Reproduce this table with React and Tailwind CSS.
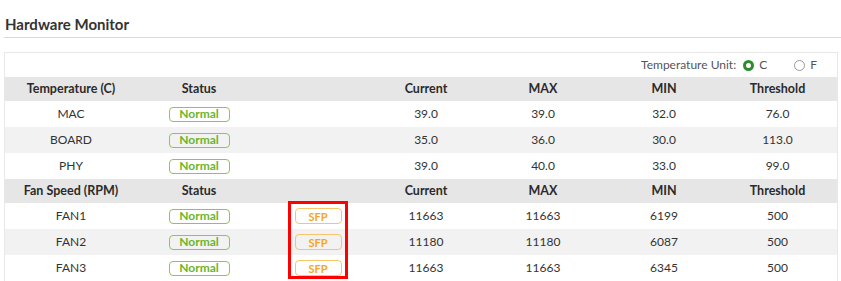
import React from "react";

const cols = "grid grid-cols-[132px_124px_114px_102px_132px_110px_117px]";

function Normal() {
  return (
    <span className="inline-flex items-center justify-center w-[61px] h-[15px] border border-[#8cc84b] rounded-[4px] text-[#6cb52d] text-[12px] font-bold leading-none">
      Normal
    </span>
  );
}
function Sfp() {
  return (
    <span className="inline-flex items-center justify-center w-[47px] h-[16px] border border-[#f9c46a] rounded-[4px] text-[#f5a623] text-[11px] font-bold leading-none">
      SFP
    </span>
  );
}

function HeaderRow({ first }) {
  return (
    <div className={`${cols} h-[24px] bg-[#e6e6e6] items-center text-center font-bold text-[12.5px] text-[#2b2b2b]`}>
      <div>{first}</div>
      <div>Status</div>
      <div></div>
      <div>Current</div>
      <div>MAX</div>
      <div>MIN</div>
      <div>Threshold</div>
    </div>
  );
}

function DataRow({ name, cur, max, min, th, alt, sfp }) {
  return (
    <div className={`${cols} h-[26px] items-center text-center text-[12px] text-[#333] ${alt ? "bg-[#f2f2f2]" : "bg-white"}`}>
      <div>{name}</div>
      <div className="flex justify-center"><Normal /></div>
      <div className="flex justify-center">{sfp ? <Sfp /> : null}</div>
      <div>{cur}</div>
      <div>{max}</div>
      <div>{min}</div>
      <div>{th}</div>
    </div>
  );
}

export default function App() {
  return (
    <div className="relative w-[841px] h-[281px] bg-white overflow-hidden font-['Lato',sans-serif] text-[#333]">
      <div className="ml-[4px] h-[38px] border-b border-[#d9d9d9] pl-[1px] pt-[15px] text-[15px] font-bold leading-[18px] text-[#333]">
        Hardware Monitor
      </div>
      <div className="mt-[14px] ml-[4px] w-[834px] border border-[#e8e8e8] border-b-0">
        <div className="h-[24px] flex items-center justify-end text-[12px] text-[#555] pr-[20px]">
          <span className="mr-[7px]">Temperature Unit:</span>
          <span className="w-[11px] h-[11px] rounded-full border-[3px] border-[#2e8b2e] bg-white mr-[5px]"></span>
          <span className="mr-[27px]">C</span>
          <span className="w-[11px] h-[11px] rounded-full border border-[#9a9a9a] bg-white mr-[5px]"></span>
          <span>F</span>
        </div>
        <HeaderRow first="Temperature (C)" />
        <DataRow name="MAC" cur="39.0" max="39.0" min="32.0" th="76.0" />
        <DataRow name="BOARD" cur="35.0" max="36.0" min="30.0" th="113.0" alt />
        <DataRow name="PHY" cur="39.0" max="40.0" min="33.0" th="99.0" />
        <HeaderRow first="Fan Speed (RPM)" />
        <DataRow name="FAN1" cur="11663" max="11663" min="6199" th="500" sfp />
        <DataRow name="FAN2" cur="11180" max="11180" min="6087" th="500" alt sfp />
        <DataRow name="FAN3" cur="11663" max="11663" min="6345" th="500" sfp />
      </div>
      <div className="absolute left-[288px] top-[201px] w-[60px] h-[78px] border-[3px] border-[#ff0000]"></div>
    </div>
  );
}
